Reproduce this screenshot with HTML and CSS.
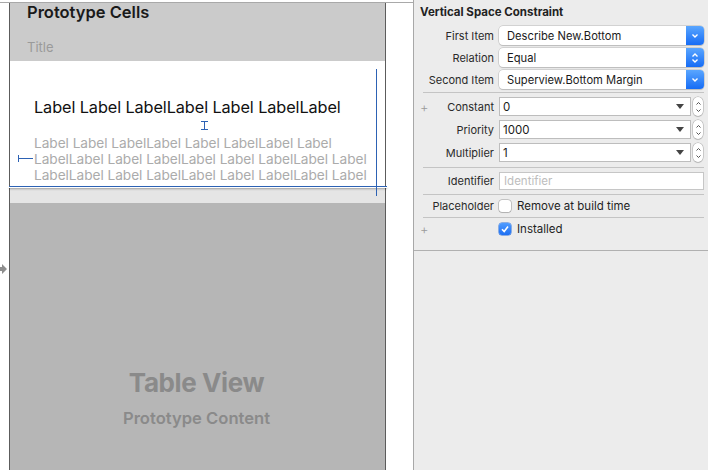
FILE: index.html
```html
<!DOCTYPE html>
<html>
<head>
<meta charset="utf-8">
<link rel="stylesheet" href="styles.css">
</head>
<body>
<div class="app">
  <div class="canvas">
    <div class="segue-arrow">
      <svg width="8" height="10" viewBox="0 0 8 10"><path d="M0 3 H3 V0 L8 5 L3 10 V7 H0 Z" fill="#8e8e8e"/></svg>
    </div>
    <div class="table">
      <div class="header">
        <div class="header-title">Prototype Cells</div>
        <div class="header-sub">Title</div>
      </div>
      <div class="cell">
        <div class="cell-main">Label Label LabelLabel Label LabelLabel</div>
        <div class="cell-detail">Label Label LabelLabel Label LabelLabel Label LabelLabel Label LabelLabel Label LabelLabel Label LabelLabel Label LabelLabel Label LabelLabel Label</div>
        <div class="guide-v"></div>
        <div class="guide-ibeam"></div>
        <div class="guide-left"></div>
      </div>
      <div class="cell-sel-line"></div>
      <div class="cell-gap"></div>
      <div class="content">
        <div class="content-title">Table View</div>
        <div class="content-sub">Prototype Content</div>
      </div>
    </div>
  </div>
  <div class="inspector">
    <div class="panel">
      <div class="panel-title">Vertical Space Constraint</div>
      <div class="row rp rp1">
        <div class="lbl">First Item</div>
        <div class="popup"><span>Describe New.Bottom</span><span class="pbtn"><svg width="8" height="6" viewBox="0 0 8 6"><path d="M1.5 1.5 L4 4 L6.5 1.5" fill="none" stroke="#fff" stroke-width="1.4"/></svg></span></div>
      </div>
      <div class="row rp">
        <div class="lbl">Relation</div>
        <div class="popup"><span>Equal</span><span class="pbtn"><svg width="8" height="12" viewBox="0 0 8 12"><path d="M1.5 4.5 L4 2 L6.5 4.5 M1.5 7.5 L4 10 L6.5 7.5" fill="none" stroke="#fff" stroke-width="1.4"/></svg></span></div>
      </div>
      <div class="row rp">
        <div class="lbl">Second Item</div>
        <div class="popup"><span>Superview.Bottom Margin</span><span class="pbtn"><svg width="8" height="6" viewBox="0 0 8 6"><path d="M1.5 1.5 L4 4 L6.5 1.5" fill="none" stroke="#fff" stroke-width="1.4"/></svg></span></div>
      </div>
      <div class="sep sep1"></div>
      <div class="row rc rc1">
        <span class="plus">+</span>
        <div class="lbl">Constant</div>
        <div class="combo"><span>0</span><span class="tri"></span></div>
        <div class="stepper"><svg width="9" height="18" viewBox="0 0 9 18"><path d="M2.5 6.5 L4.5 4.5 L6.5 6.5 M2.5 11.5 L4.5 13.5 L6.5 11.5" fill="none" stroke="#555" stroke-width="1"/></svg></div>
      </div>
      <div class="row rc">
        <div class="lbl">Priority</div>
        <div class="combo"><span>1000</span><span class="tri"></span></div>
        <div class="stepper"><svg width="9" height="18" viewBox="0 0 9 18"><path d="M2.5 6.5 L4.5 4.5 L6.5 6.5 M2.5 11.5 L4.5 13.5 L6.5 11.5" fill="none" stroke="#555" stroke-width="1"/></svg></div>
      </div>
      <div class="row rc">
        <div class="lbl">Multiplier</div>
        <div class="combo"><span>1</span><span class="tri"></span></div>
        <div class="stepper"><svg width="9" height="18" viewBox="0 0 9 18"><path d="M2.5 6.5 L4.5 4.5 L6.5 6.5 M2.5 11.5 L4.5 13.5 L6.5 11.5" fill="none" stroke="#555" stroke-width="1"/></svg></div>
      </div>
      <div class="sep sep2"></div>
      <div class="row ri">
        <div class="lbl">Identifier</div>
        <div class="field">Identifier</div>
      </div>
      <div class="sep sep3"></div>
      <div class="row rk">
        <div class="lbl">Placeholder</div>
        <span class="check"></span><span class="ctext">Remove at build time</span>
      </div>
      <div class="sep sep4"></div>
      <div class="row rk">
        <span class="plus">+</span>
        <div class="lbl"></div>
        <span class="check on"><svg width="12" height="12" viewBox="0 0 12 12"><path d="M3 6.2 L5.2 8.5 L9 3.6" fill="none" stroke="#fff" stroke-width="1.6"/></svg></span><span class="ctext">Installed</span>
      </div>
    </div>
  </div>
</div>
</body>
</html>
```

FILE: styles.css
```css
* { box-sizing: border-box; }
html, body { margin: 0; padding: 0; }
body {
  width: 708px;
  height: 470px;
  overflow: hidden;
  background: #fff;
  font-family: "Inter", "Liberation Sans", sans-serif;
}
.app {
  display: flex;
  width: 708px;
  height: 470px;
}
.canvas {
  position: relative;
  width: 413px;
  height: 470px;
  background: #fff;
  border-top: 1px solid #a9a9a9;
  margin-top: 2px;
}
.segue-arrow {
  position: absolute;
  left: -1px;
  top: 255px;
}
.table {
  margin-left: 9px;
  width: 377px;
  height: 470px;
  border-left: 1px solid #5c5c5c;
  border-right: 1px solid #5c5c5c;
  display: flex;
  flex-direction: column;
}
.header {
  background: #cbcbcb;
  height: 58px;
  padding-left: 17px;
  display: flex;
  flex-direction: column;
}
.header-title {
  font-size: 16.5px;
  font-weight: 600;
  color: #1a1a1a;
  line-height: 20px;
  margin-top: -1px;
}
.header-sub {
  font-size: 13px;
  color: #9a9a9a;
  margin-top: 17px;
  line-height: 16px;
}
.cell {
  position: relative;
  background: #fff;
  height: 125px;
  padding: 36px 0 0 24px;
}
.cell-main {
  font-size: 16.3px;
  color: #111;
  line-height: 20px;
  white-space: nowrap;
  letter-spacing: -0.1px;
}
.cell-detail {
  margin-top: 18px;
  width: 344px;
  font-size: 13.7px;
  line-height: 16px;
  color: #ababab;
  letter-spacing: -0.05px;
}
.guide-v {
  position: absolute;
  left: 366px;
  top: 8px;
  width: 1px;
  height: 127px;
  background: #2d62b4;
  z-index: 2;
}
.guide-ibeam {
  position: absolute;
  left: 191px;
  top: 60px;
  width: 7px;
  height: 9px;
  border-top: 1px solid #2d62b4;
  border-bottom: 1px solid #2d62b4;
}
.guide-ibeam::after {
  content: "";
  position: absolute;
  left: 3px;
  top: 0;
  width: 1px;
  height: 7px;
  background: #2d62b4;
}
.guide-left {
  position: absolute;
  left: 8px;
  top: 94px;
  width: 15px;
  height: 7px;
  border-left: 1px solid #2d62b4;
}
.guide-left::after {
  content: "";
  position: absolute;
  left: 0;
  top: 3px;
  width: 14px;
  height: 1px;
  background: #2d62b4;
}
.cell-sel-line {
  height: 1px;
  margin-left: -1px;
  margin-right: -2px;
  background: #2d62b4;
  box-shadow: 0 1px 0 #ffffff, 0 2px 2px rgba(0,0,0,0.45);
  position: relative;
  z-index: 1;
}
.cell-gap {
  height: 16px;
  background: #e5e5e5;
}
.content {
  flex: 1;
  background: #b6b6b6;
  display: flex;
  flex-direction: column;
  align-items: center;
  padding-top: 164px;
  padding-right: 2px;
}
.content-title {
  font-size: 26px;
  font-weight: 700;
  color: #8a8a8a;
  line-height: 32px;
  letter-spacing: -0.4px;
}
.content-sub {
  margin-top: 9px;
  font-size: 16.6px;
  font-weight: 600;
  color: #8a8a8a;
  line-height: 20px;
}
.inspector {
  flex: 1;
  background: #ececec;
  border-left: 1px solid #a8a8a8;
  height: 470px;
}
.panel {
  height: 251px;
  border-bottom: 1px solid #b0b0b0;
  padding: 5px 3px 0 6px;
}
.panel-title {
  font-size: 11.5px;
  font-weight: 700;
  color: #222;
  line-height: 14px;
}
.row {
  position: relative;
  display: flex;
  align-items: center;
  font-size: 11px;
  color: #2a2a2a;
}
.lbl {
  width: 79px;
  flex: none;
  text-align: right;
  padding-right: 5px;
  font-size: 11px;
}
.rp { height: 19px; margin-top: 3px; }
.rp1 { margin-top: 7px; }
.popup {
  flex: none;
  width: 205px;
  height: 19px;
  background: #fff;
  border-radius: 4px;
  box-shadow: 0 0 0 0.5px #b8b8b8, 0 1px 1px rgba(0,0,0,0.18);
  display: flex;
  align-items: center;
  justify-content: space-between;
  padding-left: 8px;
  font-size: 11.2px;
  color: #1a1a1a;
  overflow: hidden;
}
.pbtn {
  width: 18px;
  height: 19px;
  background: linear-gradient(#5aa6ff, #166cf5);
  display: flex;
  align-items: center;
  justify-content: center;
}
.sep {
  height: 1px;
  background: #c4c4c4;
  margin-left: 3px;
  margin-right: 1px;
}
.sep1 { margin-top: 3px; margin-bottom: 4px; }
.rc { height: 19px; margin-top: 4px; }
.rc1 { margin-top: 0; }
.combo {
  flex: none;
  width: 192px;
  height: 19px;
  background: #fff;
  border: 1px solid #bdbdbd;
  display: flex;
  align-items: center;
  justify-content: space-between;
  padding: 0 6px 0 3px;
  font-size: 11.5px;
  color: #1a1a1a;
}
.tri {
  width: 0;
  height: 0;
  border-left: 4px solid transparent;
  border-right: 4px solid transparent;
  border-top: 5px solid #444;
}
.stepper {
  margin-left: 2px;
  width: 10px;
  height: 19px;
  background: #fff;
  border-radius: 6px;
  box-shadow: 0 0 0 0.5px #aaa, 0 1px 1px rgba(0,0,0,0.15);
  display: flex;
  align-items: center;
  justify-content: center;
}
.sep2 { margin-top: 5px; margin-bottom: 4px; }
.ri { height: 18px; }
.field {
  flex: none;
  width: 205px;
  height: 18px;
  background: #fff;
  border: 1px solid #c6c6c6;
  padding-left: 4px;
  line-height: 16px;
  font-size: 11.5px;
  color: #bdbdbd;
}
.sep3 { margin-top: 4px; margin-bottom: 1px; }
.rk { height: 20px; }
.sep4 { margin-top: 1px; margin-bottom: 1px; }
.plus {
  position: absolute;
  left: 0;
  top: 2px;
  font-size: 13px;
  color: #9a9a9a;
  line-height: 16px;
  font-weight: 300;
}
.check {
  flex: none;
  width: 12px;
  height: 12px;
  background: #fff;
  border-radius: 3px;
  box-shadow: 0 0 0 0.5px #9a9a9a, 0 1px 1px rgba(0,0,0,0.15);
  margin-right: 6px;
  display: flex;
}
.check.on {
  background: linear-gradient(#4f9cff, #1e6ff2);
  box-shadow: 0 0 0 0.5px #2a6fd8;
}
.ctext {
  font-size: 11.5px;
  color: #1f1f1f;
}
```
